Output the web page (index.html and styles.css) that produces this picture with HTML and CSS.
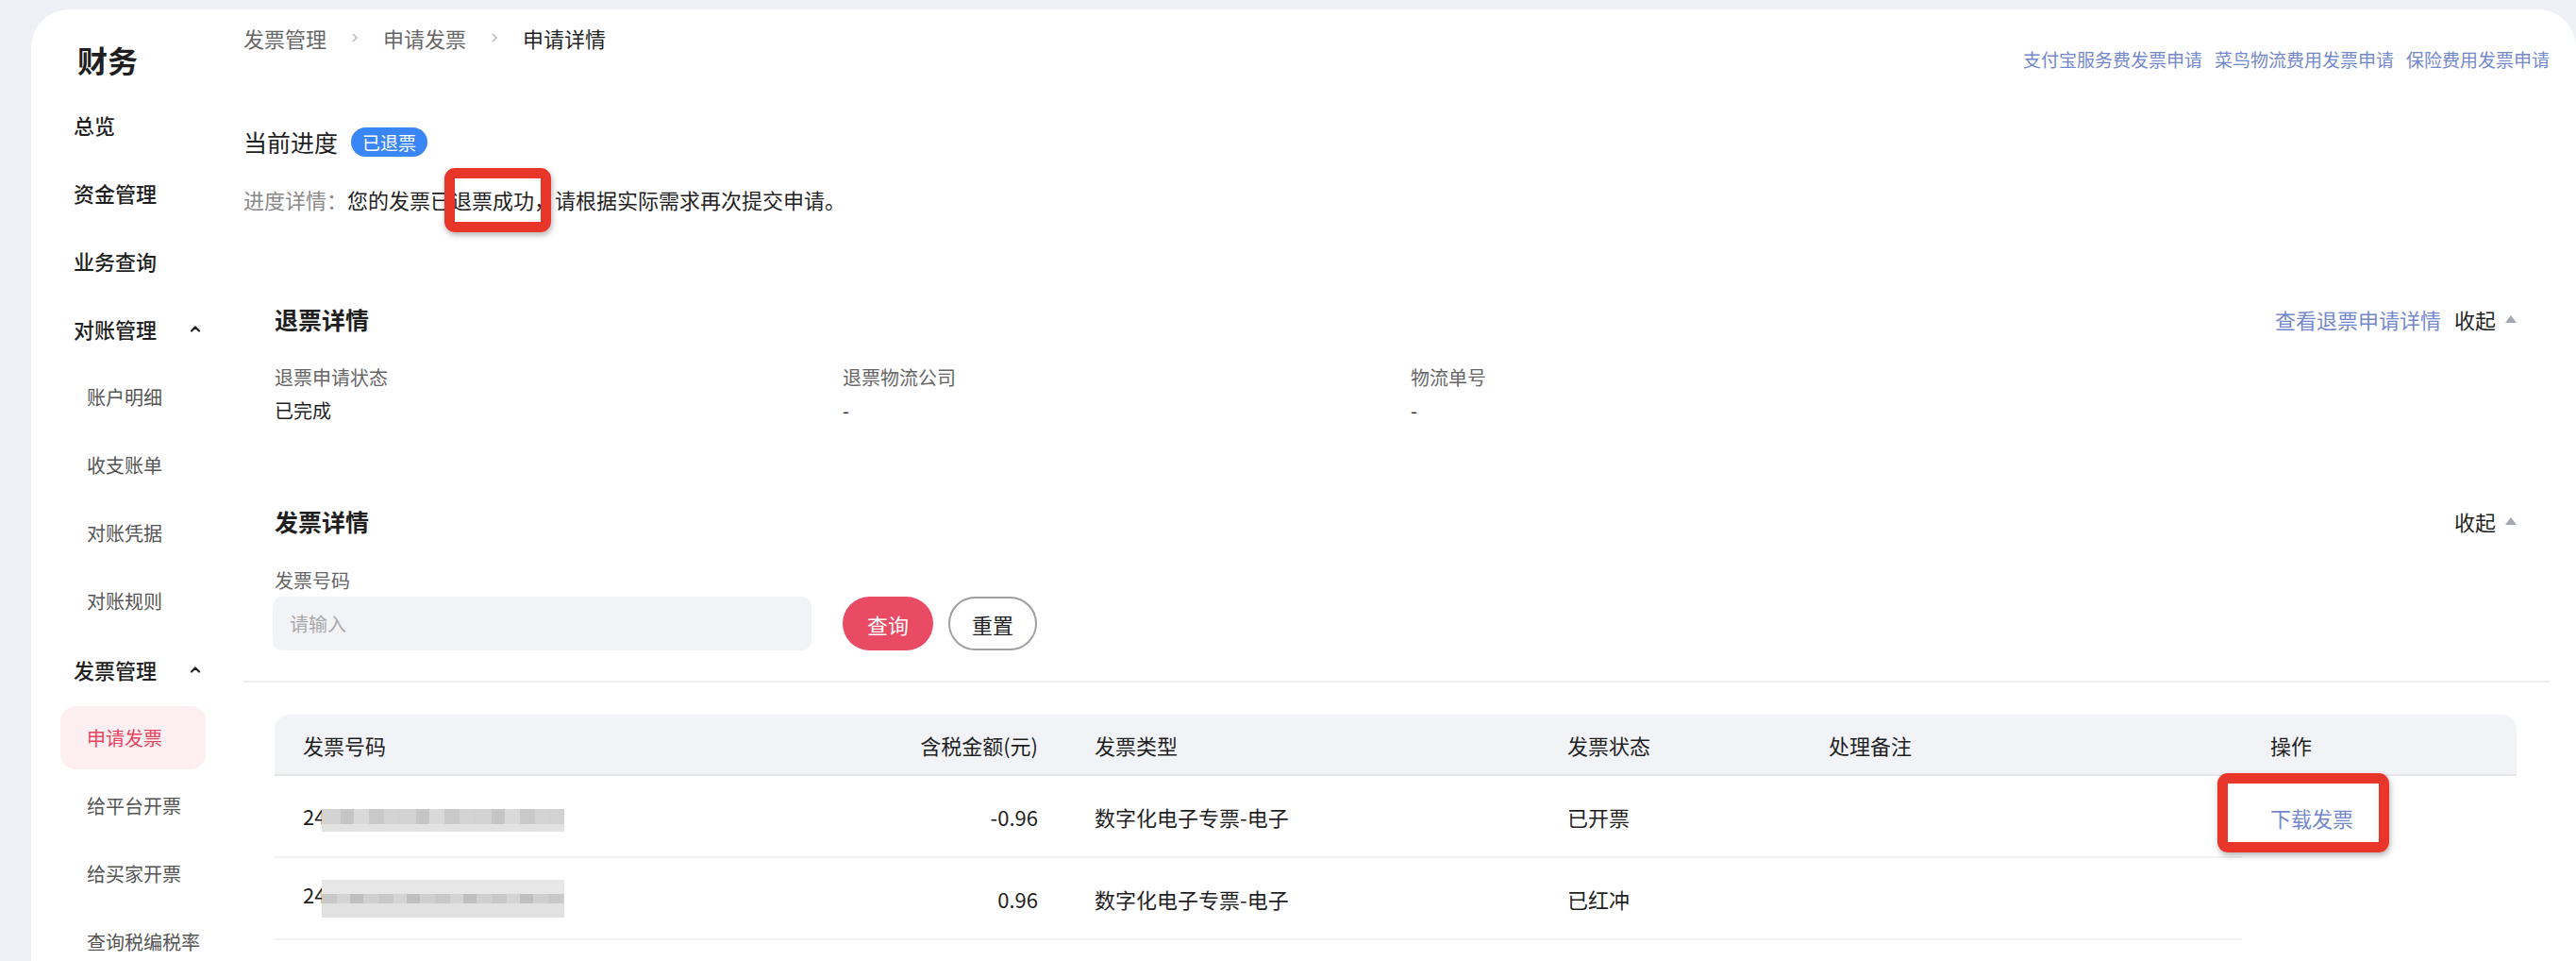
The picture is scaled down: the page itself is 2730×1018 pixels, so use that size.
FILE: index.html
```html
<!DOCTYPE html>
<html lang="zh-CN">
<head>
  <meta charset="UTF-8">
  <title>财务 - 申请详情</title>
  <link rel="stylesheet" href="styles.css">
</head>
<body>

  <div class="app">
    <div class="sidebar">
      <div class="brand">财务</div>
      <div class="nav">
        <a class="nav-item">总览</a>
        <a class="nav-item">资金管理</a>
        <a class="nav-item">业务查询</a>
        <a class="nav-item">对账管理
          <svg class="chevron" width="12" height="8" viewBox="0 0 12 8"><path d="M2 6.5L6 2.5l4 4" /></svg>
        </a>
        <a class="nav-item sub">账户明细</a>
        <a class="nav-item sub">收支账单</a>
        <a class="nav-item sub">对账凭据</a>
        <a class="nav-item sub">对账规则</a>
        <a class="nav-item">发票管理
          <svg class="chevron" width="12" height="8" viewBox="0 0 12 8"><path d="M2 6.5L6 2.5l4 4" /></svg>
        </a>
        <a class="nav-item sub active">申请发票</a>
        <a class="nav-item sub">给平台开票</a>
        <a class="nav-item sub">给买家开票</a>
        <a class="nav-item sub">查询税编税率</a>
      </div>
    </div>

    <div class="main">
      <div class="topbar">
        <div class="crumbs">
          <span>发票管理</span>
          <svg class="sep" width="8" height="12" viewBox="0 0 8 12"><path d="M2 2l4 4-4 4" /></svg>
          <span>申请发票</span>
          <svg class="sep" width="8" height="12" viewBox="0 0 8 12"><path d="M2 2l4 4-4 4" /></svg>
          <span class="current">申请详情</span>
        </div>
        <div class="quick-links">
          <a href="#">支付宝服务费发票申请</a>
          <a href="#">菜鸟物流费用发票申请</a>
          <a href="#">保险费用发票申请</a>
        </div>
      </div>

      <div class="progress">
        <div class="progress-title">当前进度 <span class="badge">已退票</span></div>
        <div class="progress-detail">
          <span class="muted">进度详情：</span>您的发票已<span class="mark mark-inline">退票成功</span>，请根据实际需求再次提交申请。
        </div>
      </div>

      <!-- 退票详情 -->
      <div class="panel refund">
        <div class="panel-head">
          <h3>退票详情</h3>
          <div class="panel-actions">
            <a href="#">查看退票申请详情</a>
            <span class="fold">收起 <i class="caret-up"></i></span>
          </div>
        </div>
        <div class="fields">
          <div>
            <div class="field-label">退票申请状态</div>
            <div class="field-value">已完成</div>
          </div>
          <div>
            <div class="field-label">退票物流公司</div>
            <div class="field-value">-</div>
          </div>
          <div>
            <div class="field-label">物流单号</div>
            <div class="field-value">-</div>
          </div>
        </div>
      </div>

      <!-- 发票详情 -->
      <div class="panel invoice">
        <div class="panel-head">
          <h3>发票详情</h3>
          <div class="panel-actions">
            <span class="fold">收起 <i class="caret-up"></i></span>
          </div>
        </div>
        <div class="search-label">发票号码</div>
        <div class="search-row">
          <input class="search-input" type="text" placeholder="请输入">
          <button class="btn btn-primary">查询</button>
          <button class="btn btn-ghost">重置</button>
        </div>
      </div>

      <div class="divider"></div>

      <div class="panel table-panel">
        <table class="invoice-table">
          <colgroup>
            <col class="c-no">
            <col class="c-amount">
            <col class="c-type">
            <col class="c-status">
            <col class="c-note">
            <col class="c-op">
          </colgroup>
          <thead>
            <tr>
              <th>发票号码</th>
              <th class="num">含税金额(元)</th>
              <th>发票类型</th>
              <th>发票状态</th>
              <th>处理备注</th>
              <th>操作</th>
            </tr>
          </thead>
          <tbody>
            <tr>
              <td>24<span class="redacted r1"></span></td>
              <td class="num">-0.96</td>
              <td>数字化电子专票-电子</td>
              <td>已开票</td>
              <td></td>
              <td><a href="#" class="op-link mark mark-cell">下载发票</a></td>
            </tr>
            <tr>
              <td>24<span class="redacted r2"></span></td>
              <td class="num">0.96</td>
              <td>数字化电子专票-电子</td>
              <td>已红冲</td>
              <td></td>
              <td></td>
            </tr>
          </tbody>
        </table>
      </div>
    </div>
  </div>

</body>
</html>
```

FILE: styles.css
```css
* {
  box-sizing: border-box;
}

body {
  margin: 0;
  background-color: #eef0f5;
  font-family: "Noto Sans CJK SC", "Noto Sans", sans-serif;
  color: #1f1f1f;
  overflow: hidden;
}

a {
  text-decoration: none;
}

.app {
  display: flex;
  margin: 10px 0 0 33px;
  height: calc(100vh - 10px);
  background-color: #fff;
  border-radius: 40px 40px 0 0;
  overflow: hidden;
}

/* sidebar */

.sidebar {
  width: 225px;
  flex: none;
  padding: 31px 0 0 31px;
}

.brand {
  font-size: 32px;
  line-height: 44px;
  font-weight: 600;
  padding-left: 18px;
  margin-bottom: 13px;
}

.nav {
  display: flex;
  flex-direction: column;
  gap: 5.2px;
}

.nav-item {
  width: 154px;
  height: 67px;
  flex: none;
  display: flex;
  align-items: center;
  justify-content: space-between;
  padding: 0 5px 0 14px;
  font-size: 22px;
  font-weight: 500;
  color: #1f1f1f;
  border-radius: 16px;
}

.nav-item.sub {
  padding-left: 28px;
  font-size: 20px;
  font-weight: 400;
  color: #555;
}

.nav-item.active {
  background-color: #fdeef1;
  color: #e8455f;
}

.chevron path {
  fill: none;
  stroke: #1f1f1f;
  stroke-width: 2.2;
  stroke-linecap: round;
  stroke-linejoin: round;
}

/* main area */

.main {
  flex: 1;
  min-width: 0;
  padding: 15px 28px 0 0;
}

.topbar {
  display: flex;
  justify-content: space-between;
  align-items: flex-start;
}

.crumbs {
  display: flex;
  align-items: center;
  font-size: 22px;
  line-height: 30px;
  color: #666;
}

.crumbs .sep {
  margin: 0 26px;
}

.crumbs .sep path {
  fill: none;
  stroke: #bdbdbd;
  stroke-width: 1.6;
}

.crumbs .current {
  color: #1f1f1f;
}

.quick-links {
  display: flex;
  gap: 13px;
  margin-top: 25px;
  font-size: 19px;
  line-height: 26px;
}

.quick-links a,
.panel-actions a,
.op-link {
  color: #7388cc;
}

.progress {
  margin-top: 57px;
}

.progress-title {
  display: flex;
  align-items: center;
  gap: 14px;
  font-size: 25px;
  line-height: 34px;
}

.badge {
  height: 31px;
  padding: 0 12px;
  border-radius: 16px;
  background-color: #3b86f6;
  color: #fff;
  font-size: 19px;
  line-height: 31px;
}

.progress-detail {
  margin-top: 29px;
  font-size: 22px;
  line-height: 30px;
}

.muted {
  color: #888;
}

/* red call-out frame */

.mark {
  position: relative;
}

.mark::after {
  content: "";
  position: absolute;
  border: 11px solid #e8372a;
  border-radius: 11px;
  box-shadow: 1px 3px 6px rgba(0, 0, 0, 0.3);
  pointer-events: none;
}

.mark-inline::after {
  left: -7px;
  right: -18px;
  top: -17px;
  bottom: -19px;
}

.mark-cell {
  display: inline-block;
  line-height: 30px;
}

.mark-cell::after {
  left: -56px;
  right: -38px;
  top: -32px;
  bottom: -22px;
}

/* panels */

.panel {
  padding: 0 35px 0 33px;
}

.refund {
  margin-top: 95px;
}

.invoice {
  margin-top: 86px;
}

.panel-head {
  display: flex;
  justify-content: space-between;
  align-items: center;
}

.panel-head h3 {
  margin: 0;
  font-size: 25px;
  line-height: 34px;
  font-weight: 600;
}

.panel-actions {
  display: flex;
  align-items: center;
  gap: 14px;
  font-size: 22px;
  line-height: 30px;
}

.fold {
  display: flex;
  align-items: center;
  gap: 10px;
}

.caret-up {
  width: 0;
  height: 0;
  border-left: 6px solid transparent;
  border-right: 6px solid transparent;
  border-bottom: 8px solid #a4a7b3;
}

.fields {
  display: grid;
  grid-template-columns: repeat(3, 602px);
  margin-top: 31px;
}

.field-label {
  font-size: 20px;
  line-height: 28px;
  color: #666;
}

.field-value {
  margin-top: 7px;
  font-size: 20px;
  line-height: 28px;
}

.search-label {
  margin-top: 32px;
  font-size: 20px;
  line-height: 28px;
  color: #666;
}

.search-row {
  display: flex;
  align-items: center;
  margin-top: 3px;
}

.search-input {
  width: 571px;
  height: 57px;
  margin-left: -2px;
  padding: 0 18px;
  border: none;
  border-radius: 10px;
  background-color: #f2f3f7;
  font-family: inherit;
  font-size: 20px;
  outline: none;
}

.search-input::placeholder {
  color: #a8a8a8;
}

.btn {
  height: 57px;
  border-radius: 29px;
  font-family: inherit;
  font-size: 22px;
  cursor: pointer;
}

.btn-primary {
  width: 96px;
  margin-left: 33px;
  border: none;
  background-color: #e94b65;
  color: #fff;
}

.btn-ghost {
  width: 94px;
  margin-left: 16px;
  border: 2px solid #a0a0a0;
  background-color: #fff;
  color: #1f1f1f;
}

.divider {
  margin-top: 32px;
  border-top: 2px solid #eff0f4;
}

/* table */

.table-panel {
  margin-top: 34px;
}

.invoice-table {
  width: 100%;
  table-layout: fixed;
  border-collapse: separate;
  border-spacing: 0;
  font-size: 22px;
}

.c-no { width: 409px; }
.c-amount { width: 430px; }
.c-type { width: 501px; }
.c-status { width: 277px; }
.c-note { width: 468px; }
.c-op { width: 291px; }

.invoice-table th {
  height: 65px;
  padding: 0 30px;
  background-color: #f2f3f7;
  border-bottom: 2px solid #e5e6eb;
  font-weight: 400;
  text-align: left;
}

.invoice-table th:first-child {
  border-top-left-radius: 16px;
}

.invoice-table th:last-child {
  border-top-right-radius: 16px;
}

.invoice-table td {
  height: 87px;
  padding: 0 30px;
  border-bottom: 2px solid #f0f1f4;
  white-space: nowrap;
}

.invoice-table td:last-child {
  border-bottom: none;
}

.invoice-table .num {
  text-align: right;
}

/* masked invoice numbers */

.redacted {
  display: inline-block;
  vertical-align: middle;
  width: 257px;
  margin-left: -4px;
  filter: blur(0.6px);
}

.redacted.r1 {
  height: 24px;
  background:
    linear-gradient(to bottom, transparent 68%, #e2e2e2 68%),
    repeating-linear-gradient(90deg, #d2d2d2 0 20px, #c5c5c5 20px 34px, #d9d9d9 34px 50px, #c9c9c9 50px 66px, #d4d4d4 66px 80px);
}

.redacted.r2 {
  height: 40px;
  background:
    linear-gradient(to bottom, #e7e7e7 0 38%, transparent 38% 62%, #e1e1e1 62%),
    repeating-linear-gradient(90deg, #c8c8c8 0 16px, #d4d4d4 16px 30px, #bfbfbf 30px 44px, #cfcfcf 44px 60px);
}
```
